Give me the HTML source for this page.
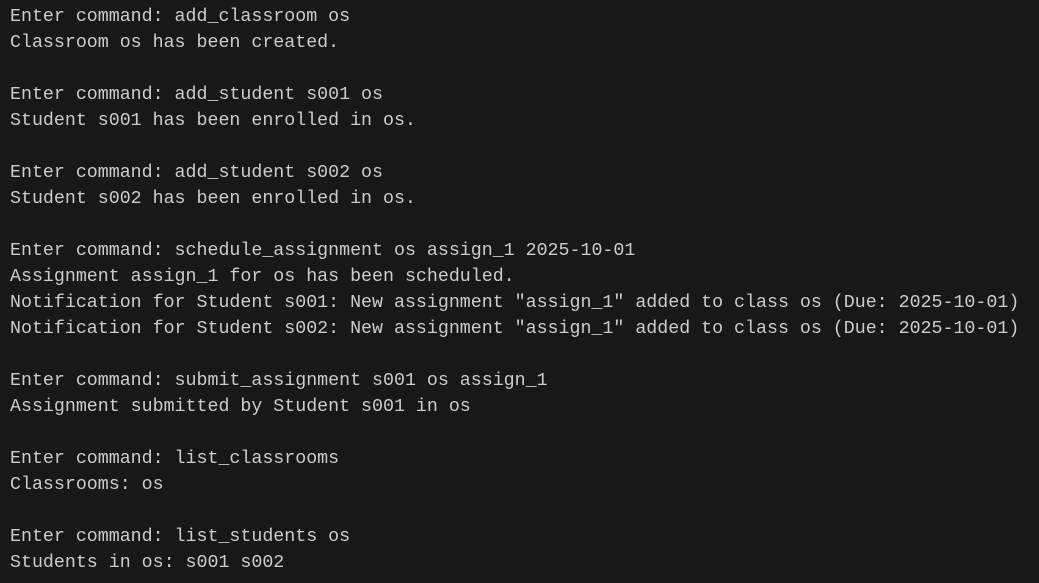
<!DOCTYPE html>
<html><head><style>
html,body{margin:0;padding:0;background:#181818;width:1039px;height:583px;overflow:hidden}
pre{margin:0;padding:4px 0 0 10px;font-family:"Liberation Mono",monospace;font-size:18.3px;line-height:26px;color:#cccccc}
</style></head><body><pre>Enter command: add_classroom os
Classroom os has been created.

Enter command: add_student s001 os
Student s001 has been enrolled in os.

Enter command: add_student s002 os
Student s002 has been enrolled in os.

Enter command: schedule_assignment os assign_1 2025-10-01
Assignment assign_1 for os has been scheduled.
Notification for Student s001: New assignment "assign_1" added to class os (Due: 2025-10-01)
Notification for Student s002: New assignment "assign_1" added to class os (Due: 2025-10-01)

Enter command: submit_assignment s001 os assign_1
Assignment submitted by Student s001 in os

Enter command: list_classrooms
Classrooms: os

Enter command: list_students os
Students in os: s001 s002</pre></body></html>
